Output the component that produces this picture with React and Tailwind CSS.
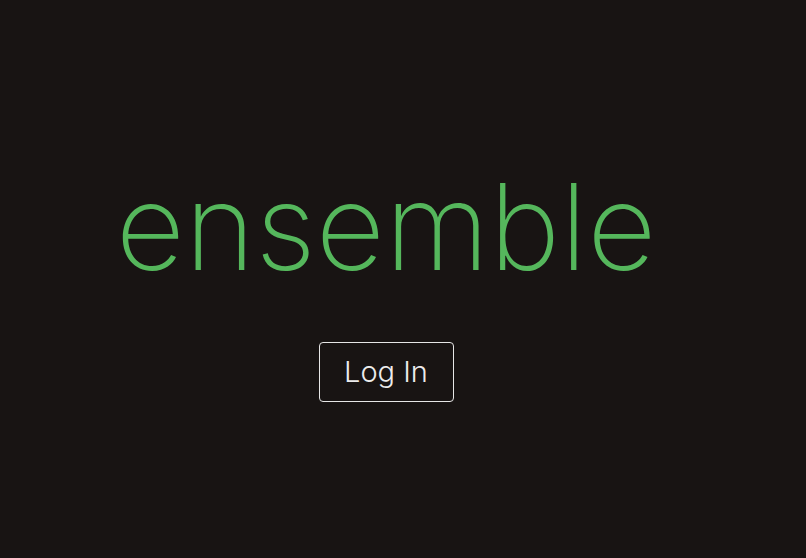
import React from "react";

const App = () => {
  return (
    <div className="w-full h-[558px] bg-[#181413] flex flex-col items-center pt-[167px] pr-[34px]" style={{ fontFamily: "Inter, 'Noto Sans', sans-serif" }}>
      <h1 className="text-[120px] leading-none font-extralight text-[#55b75c]">ensemble</h1>
      <button className="mt-[55px] w-[135px] h-[60px] border-[1.5px] border-[#e6e6e6] rounded-[4px] text-[29px] font-light text-[#ececec] flex items-center justify-center">
        Log In
      </button>
    </div>
  );
};

export default App;
